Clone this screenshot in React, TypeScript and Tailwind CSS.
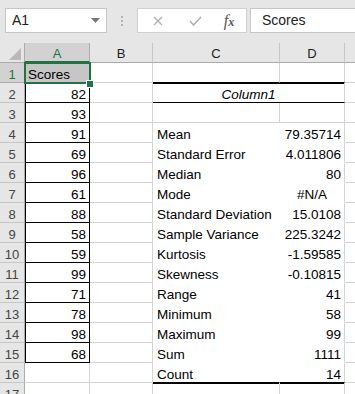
import { ReactNode } from 'react';

// Excel-like sheet: Scores in A, descriptive statistics in C:D
const SCORES = [82, 93, 91, 69, 96, 61, 88, 58, 59, 99, 71, 78, 98, 68];

const STATS: [string, string][] = [
  ['Mean', '79.35714'],
  ['Standard Error', '4.011806'],
  ['Median', '80'],
  ['Mode', '#N/A'],
  ['Standard Deviation', '15.0108'],
  ['Sample Variance', '225.3242'],
  ['Kurtosis', '-1.59585'],
  ['Skewness', '-0.10815'],
  ['Range', '41'],
  ['Minimum', '58'],
  ['Maximum', '99'],
  ['Sum', '1111'],
  ['Count', '14'],
];

const GRID = 'border-[#d4d4d4]';

function Cell({ className = '', children }: { className?: string; children?: ReactNode }) {
  return (
    <div className={`h-[20px] border-r border-b flex items-start pt-[4px] px-[3px] leading-[15px] whitespace-nowrap overflow-hidden ${className}`}>
      {children}
    </div>
  );
}

function RowHead({ n, active }: { n: number; active?: boolean }) {
  return (
    <div
      className={`h-[20px] border-b border-r flex items-start pt-[4px] leading-[15px] justify-center text-[13px] overflow-hidden ${
        active ? 'bg-[#d2d2d2] text-[#217346] border-r-[#217346] border-b-[#ababab]' : 'bg-[#e6e6e6] text-[#444] border-[#ababab] border-b-[#c6c6c6]'
      }`}
    >
      {n}
    </div>
  );
}

function ColHead({ label, active }: { label: string; active?: boolean }) {
  return (
    <div
      className={`h-[20px] border-r flex items-start pt-[3px] leading-[15px] justify-center text-[13px] ${
        active
          ? 'bg-[#d2d2d2] border-[#ababab] border-b-2 border-b-[#217346] text-[#217346]'
          : 'bg-[#e6e6e6] border-b border-[#c6c6c6] border-b-[#ababab] text-[#222]'
      }`}
    >
      {label}
    </div>
  );
}

export default function App() {
  const rows: ReactNode[] = [];

  for (let r = 1; r <= 16; r++) {
    const a =
      r === 1 ? (
        <Cell key={`a${r}`} className={`bg-[#c6c6c6] ${GRID}`}>Scores</Cell>
      ) : r <= 15 ? (
        <Cell key={`a${r}`} className="justify-end border-black shadow-[inset_1px_0_0_#000]">
          {SCORES[r - 2]}
        </Cell>
      ) : (
        <Cell key={`a${r}`} className={GRID} />
      );

    let c: ReactNode;
    let d: ReactNode;
    if (r === 1) {
      c = <Cell key={`c${r}`} className={`${GRID} border-b-black`} />;
      d = <Cell key={`d${r}`} className={`${GRID} border-b-black`} />;
    } else if (r === 2) {
      c = (
        <div key={`c${r}`} className="col-span-2 h-[20px] border-r border-b border-r-[#d4d4d4] border-b-black shadow-[inset_0_1px_0_#000] flex items-start pt-[4px] justify-center leading-[15px] italic">
          Column1
        </div>
      );
      d = null;
    } else if (r === 3) {
      c = <Cell key={`c${r}`} className={GRID} />;
      d = <Cell key={`d${r}`} className={GRID} />;
    } else {
      const [label, value] = STATS[r - 4];
      const last = r === 16;
      c = (
        <Cell key={`c${r}`} className={`pl-[4px] border-r-white ${last ? 'border-b-black' : 'border-b-white'}`}>
          {label}
        </Cell>
      );
      d = (
        <Cell
          key={`d${r}`}
          className={`border-r-[#d4d4d4] ${last ? 'border-b-black' : 'border-b-white'} ${value === '#N/A' ? 'justify-center' : 'justify-end'}`}
        >
          {value}
        </Cell>
      );
    }

    rows.push(
      <RowHead key={`h${r}`} n={r} active={r === 1} />,
      a,
      <Cell key={`b${r}`} className={GRID} />,
      c,
      d,
      <Cell key={`e${r}`} className={`${GRID} border-r-0`} />
    );
  }

  return (
    <div
      className="w-[355px] h-[394px] overflow-hidden bg-white text-[13.5px] text-black"
      style={{ fontFamily: '"Liberation Sans", Arial, sans-serif' }}
    >
      {/* formula bar */}
      <div className="h-[43px] bg-[#e6e6e6] flex items-start pt-[8px] pl-[5px]">
        <div className="w-[102px] h-[25px] bg-white border border-[#c6c6c6] flex items-center justify-between pl-[6px] pr-[6px] text-[14px] text-[#222]">
          <span>A1</span>
          <svg width="9" height="5" viewBox="0 0 9 5">
            <path d="M0 0h9L4.5 5z" fill="#777" />
          </svg>
        </div>
        <div className="w-[30px] h-[25px] flex flex-col items-center justify-center gap-[2px]">
          <span className="w-[2px] h-[2px] bg-[#b4b4b4]" />
          <span className="w-[2px] h-[2px] bg-[#b4b4b4]" />
          <span className="w-[2px] h-[2px] bg-[#b4b4b4]" />
        </div>
        <div className="w-[110px] h-[25px] bg-white border border-[#d0d0d0] flex items-center">
          <div className="w-[40px] flex justify-center">
            <svg width="10" height="10" viewBox="0 0 10 10">
              <path d="M1 1l8 8M9 1l-8 8" stroke="#b0b0b0" strokeWidth="1.3" />
            </svg>
          </div>
          <div className="w-[34px] flex justify-center">
            <svg width="13" height="10" viewBox="0 0 13 10">
              <path d="M1 5l3.5 4L12 1" stroke="#b0b0b0" strokeWidth="1.6" fill="none" />
            </svg>
          </div>
          <div
            className="w-[34px] flex justify-center items-baseline italic text-[#555]"
            style={{ fontFamily: '"Liberation Serif", serif' }}
          >
            <span className="text-[16px]">f</span>
            <span className="text-[12px] font-bold">x</span>
          </div>
        </div>
        <div className="ml-[3px] flex-1 h-[25px] bg-white border border-r-0 border-[#c6c6c6] flex items-center pl-[11px] text-[14px] text-[#222]">
          Scores
        </div>
      </div>

      {/* sheet */}
      <div className="relative">
        <div className="grid grid-cols-[25px_65px_63px_127px_65px_1fr]">
          {/* column headers */}
          <div className="h-[20px] bg-[#e6e6e6] border-r border-b border-[#ababab] flex items-end justify-end pr-[3px] pb-[2px]">
            <svg width="12" height="12" viewBox="0 0 12 12">
              <path d="M12 0V12H0z" fill="#b9b9b9" />
            </svg>
          </div>
          <ColHead label="A" active />
          <ColHead label="B" />
          <ColHead label="C" />
          <ColHead label="D" />
          <div className="h-[20px] bg-[#e6e6e6] border-b border-[#ababab]" />

          {rows}

          {/* partial row 17 */}
          <RowHead n={17} />
          <Cell className={GRID} />
          <Cell className={GRID} />
          <Cell className={`${GRID} shadow-[inset_0_1px_0_#000]`} />
          <Cell className={`${GRID} shadow-[inset_0_1px_0_#000]`} />
          <Cell className={`${GRID} border-r-0`} />
        </div>

        {/* active cell selection */}
        <div className="absolute left-[24px] top-[19px] w-[67px] h-[22px] border-2 border-[#217346] pointer-events-none" />
        <div className="absolute left-[87px] top-[38px] w-[6px] h-[6px] bg-[#217346] outline outline-1 outline-white pointer-events-none" />
      </div>
    </div>
  );
}
